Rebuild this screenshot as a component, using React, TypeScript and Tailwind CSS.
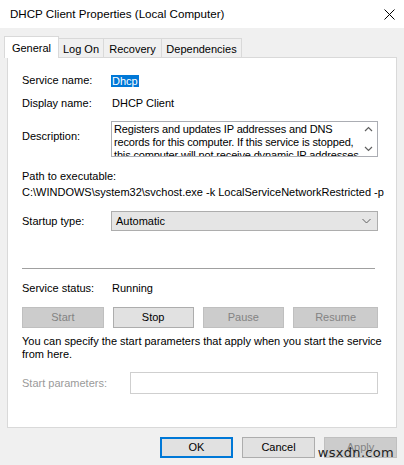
import React from "react"

const font = { fontFamily: '"Liberation Sans", Arial, sans-serif' }

function TabButton({ label, active, w }: { label: string; active?: boolean; w: string }) {
  if (active) {
    return (
      <div className={`relative z-10 -mb-px h-[22px] ${w} border border-b-0 border-[#d9d9d9] bg-white pt-[3px] text-center text-[11px] text-black`}>
        {label}
      </div>
    )
  }
  return (
    <div className={`h-[19px] ${w} border border-l-0 border-b-0 border-[#d9d9d9] bg-[#f0f0f0] pt-[2px] text-center text-[11px] text-black`}>
      {label}
    </div>
  )
}

function WinButton({ label, disabled, def, w }: { label: string; disabled?: boolean; def?: boolean; w: string }) {
  const base = "flex h-[21px] items-center justify-center text-[11px]"
  if (disabled) {
    return <div className={`${base} ${w} border border-[#bfbfbf] bg-[#cccccc] text-[#838383]`}>{label}</div>
  }
  if (def) {
    return <div className={`${base} ${w} border-2 border-[#0078d7] bg-[#e1e1e1] text-black`}>{label}</div>
  }
  return <div className={`${base} ${w} border border-[#adadad] bg-[#e1e1e1] text-black`}>{label}</div>
}

export default function App() {
  return (
    <div className="relative h-[465px] w-[404px] overflow-hidden bg-[#f0f0f0] text-black" style={font}>
      {/* title bar */}
      <div className="flex h-[28px] items-center justify-between bg-white pl-[10px] pr-[9px]">
        <span className="text-[11.6px]">DHCP Client Properties (Local Computer)</span>
        <svg width="11" height="11" viewBox="0 0 11 11" className="mt-[1px]">
          <path d="M0.5 0.5 L10.5 10.5 M10.5 0.5 L0.5 10.5" stroke="#000" strokeWidth="1" />
        </svg>
      </div>

      {/* tabs */}
      <div className="mt-[8px] flex items-end pl-[4px]">
        <TabButton label="General" active w="w-[55px]" />
        <TabButton label="Log On" w="w-[45px]" />
        <TabButton label="Recovery" w="w-[58px]" />
        <TabButton label="Dependencies" w="w-[80px]" />
      </div>

      {/* panel */}
      <div className="ml-[7px] h-[371px] w-[390px] border border-[#d9d9d9] bg-white pl-[14px] pr-[18px] text-[11px]">
        <div className="mt-[16px] flex h-[13px] items-center">
          <span className="w-[90px]">Service name:</span>
          <span className="-ml-[1px] bg-[#0078d7] px-[1px] leading-[12px] text-white">Dhcp</span>
        </div>
        <div className="mt-[10px] flex h-[13px] items-center">
          <span className="w-[90px]">Display name:</span>
          <span>DHCP Client</span>
        </div>

        <div className="mt-[11px] flex">
          <span className="mt-[7px] w-[89px]">Description:</span>
          <div className="flex h-[36px] w-[267px] overflow-hidden border border-[#abadb3] bg-white">
            <div className="flex-1 overflow-hidden whitespace-nowrap pl-[2px] pt-[1px] text-[11px] leading-[13px] tracking-[-0.15px]">
              Registers and updates IP addresses and DNS
              <br />
              records for this computer. If this service is stopped,
              <br />
              this computer will not receive dynamic IP addresses
            </div>
            <div className="flex w-[15px] flex-col items-center justify-between py-[4px] pr-[2px]">
              <svg width="9" height="6" viewBox="0 0 9 6">
                <path d="M1 5 L4.5 1.5 L8 5" fill="none" stroke="#606060" strokeWidth="1.2" />
              </svg>
              <svg width="9" height="6" viewBox="0 0 9 6">
                <path d="M1 1 L4.5 4.5 L8 1" fill="none" stroke="#606060" strokeWidth="1.2" />
              </svg>
            </div>
          </div>
        </div>

        <div className="mt-[13px] h-[13px] leading-[13px]">Path to executable:</div>
        <div className="-mr-[18px] mt-[3px] h-[13px] overflow-hidden whitespace-nowrap leading-[13px]">
          C:\WINDOWS\system32\svchost.exe -k LocalServiceNetworkRestricted -p
        </div>

        <div className="mt-[12px] flex items-center">
          <span className="w-[89px]">Startup type:</span>
          <div className="flex h-[20px] w-[267px] items-center justify-between border border-[#adadad] bg-[#e5e5e5] pl-[4px] pr-[6px]">
            <span>Automatic</span>
            <svg width="9" height="6" viewBox="0 0 9 6">
              <path d="M0.5 1 L4.5 5 L8.5 1" fill="none" stroke="#606060" strokeWidth="1" />
            </svg>
          </div>
        </div>

        <div className="mt-[37px] h-px w-[353px] bg-[#a0a0a0]" />

        <div className="mt-[13px] flex h-[13px] items-center">
          <span className="w-[90px]">Service status:</span>
          <span>Running</span>
        </div>

        <div className="mt-[12px] flex gap-[9px]">
          <WinButton label="Start" disabled w="w-[82px]" />
          <WinButton label="Stop" w="w-[81px]" />
          <WinButton label="Pause" disabled w="w-[82px]" />
          <WinButton label="Resume" disabled w="w-[85px]" />
        </div>

        <div className="mt-[7px] w-[360px] leading-[13px]">
          You can specify the start parameters that apply when you start the service from here.
        </div>

        <div className="mt-[11px] flex items-center">
          <span className="w-[108px] text-[#9a9a9a]">Start parameters:</span>
          <div className="h-[22px] w-[249px] border border-[#cfcfcf] bg-white" />
        </div>
      </div>

      {/* dialog buttons */}
      <div className="mt-[9px] flex justify-end gap-[9px] pr-[7px]">
        <WinButton label="OK" def w="w-[73px]" />
        <WinButton label="Cancel" w="w-[73px]" />
        <WinButton label="Apply" disabled w="w-[73px]" />
      </div>

      <span
        className="absolute right-[10px] top-[446px] text-[13px] leading-[14px] tracking-[0.3px] text-[#222]"
        style={{ fontFamily: '"DejaVu Sans", sans-serif' }}
      >
        wsxdn.com
      </span>
    </div>
  )
}
